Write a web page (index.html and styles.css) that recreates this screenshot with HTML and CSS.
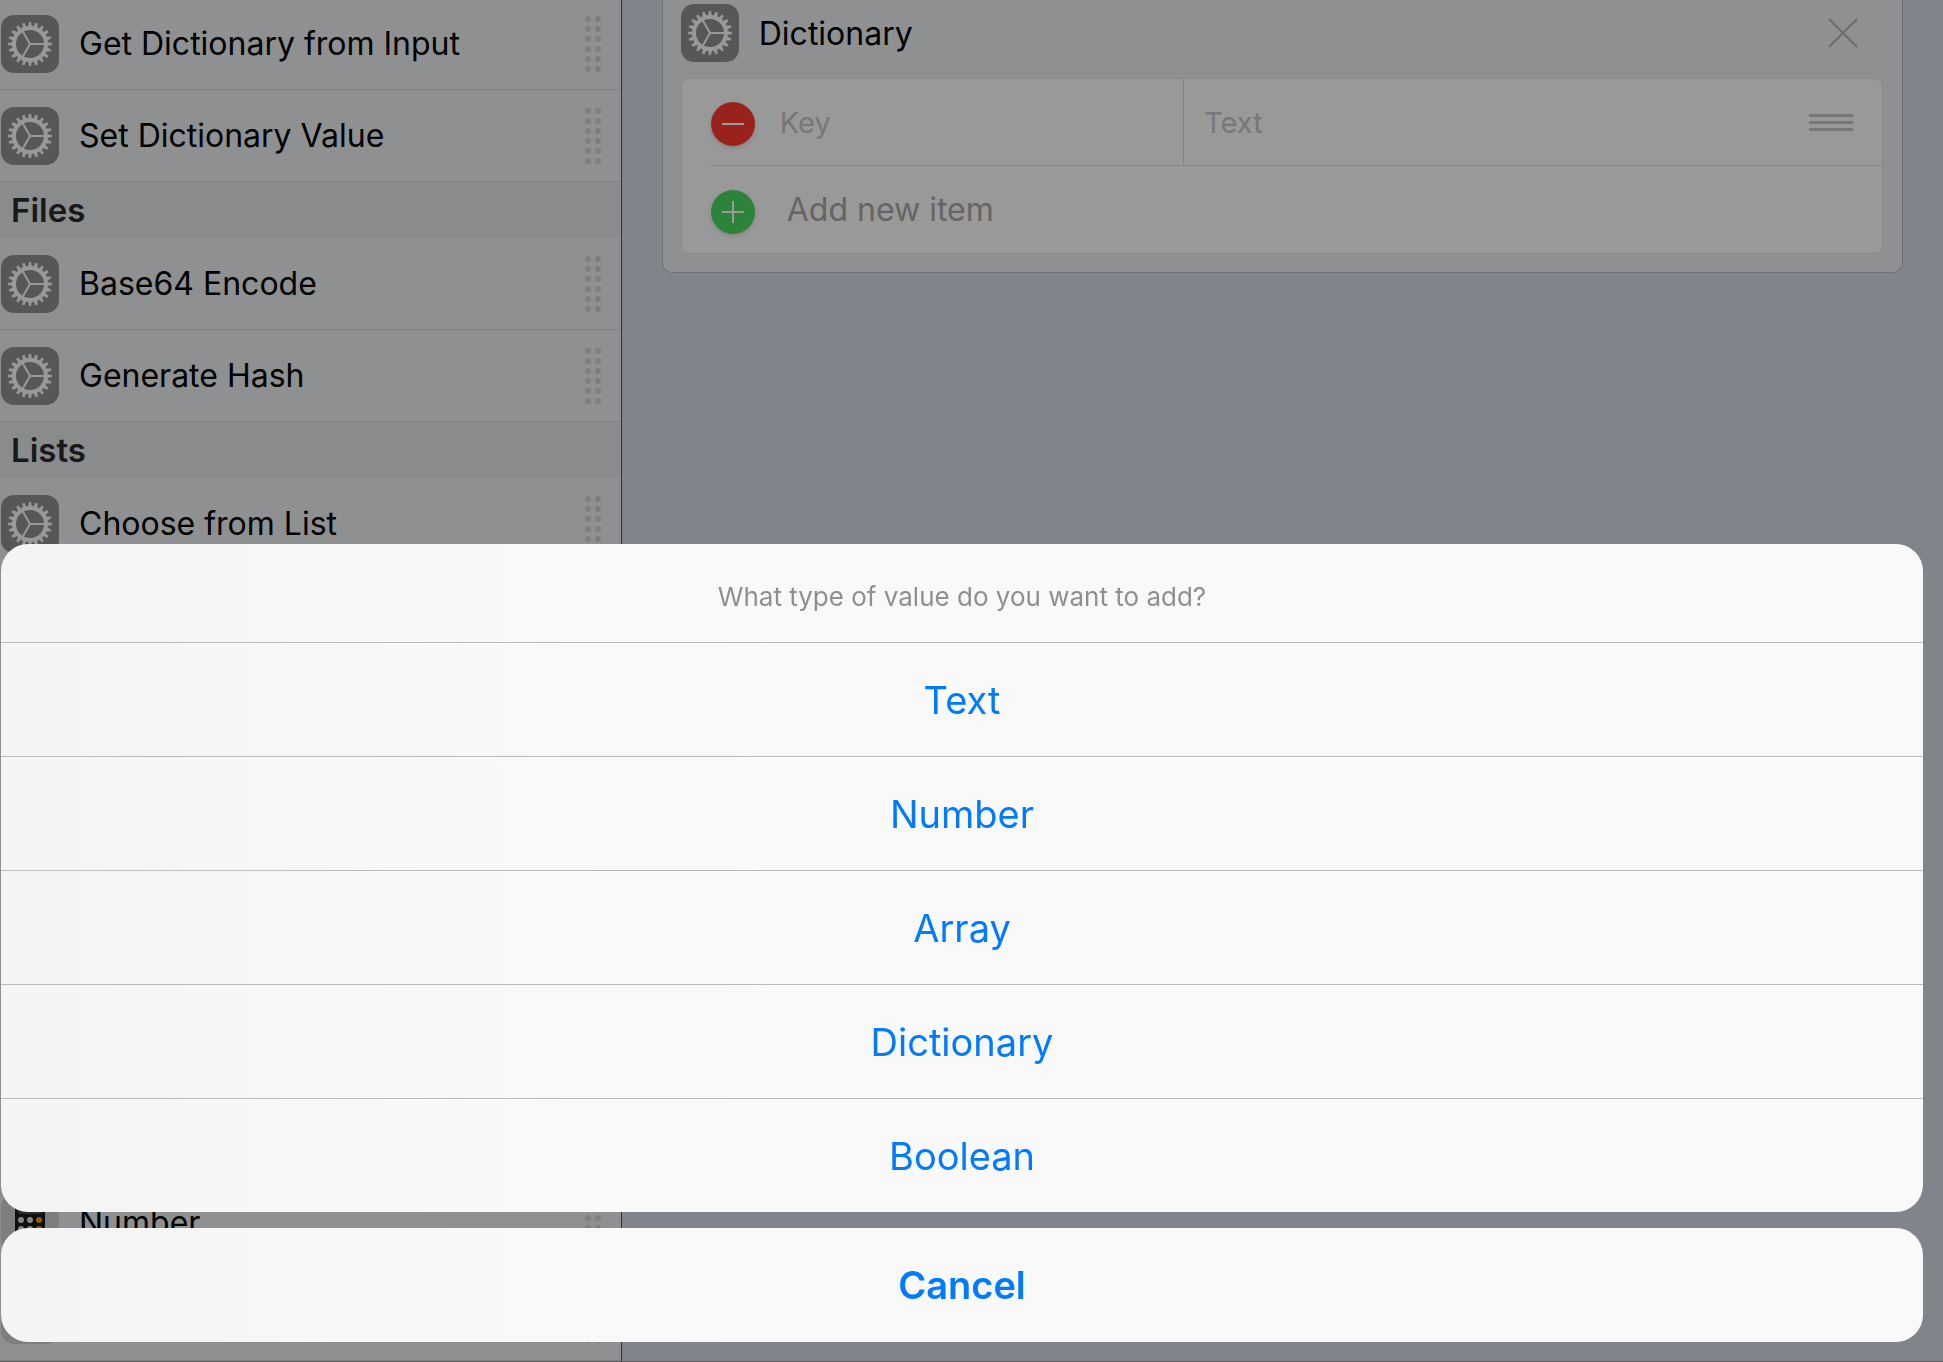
FILE: index.html
```html
<!DOCTYPE html>
<html lang="en">
<head>
    <meta charset="UTF-8">
    <meta name="viewport" content="width=device-width, initial-scale=1.0">
    <title>Dictionary</title>
    <link rel="stylesheet" href="styles.css">
</head>
<body>
    <!-- Shared icons -->
    <svg class="sprite" aria-hidden="true">
        <symbol id="gear" viewBox="0 0 58 58">
            <rect width="58" height="58" rx="13" fill="#929295"/>
            <g fill="none" stroke="#fff">
                <circle cx="29" cy="29" r="16" stroke-width="4"/>
                <circle cx="29" cy="29" r="18" stroke-width="3" pathLength="200" stroke-dasharray="6 4" stroke-dashoffset="3"/>
                <circle cx="29" cy="29" r="20" stroke-width="4" pathLength="200" stroke-dasharray="4 6" stroke-dashoffset="2"/>
                <path d="M29 29H44M29 29L21 15M29 29L21 43" stroke-width="2"/>
            </g>
        </symbol>
        <symbol id="grip" viewBox="0 0 16 56">
            <path d="M3 3V54M13 3V54" fill="none" stroke="#d0d4d9" stroke-width="6" stroke-linecap="round" stroke-dasharray="0 10"/>
        </symbol>
        <symbol id="calculator" viewBox="0 0 58 58">
            <rect width="58" height="58" rx="13" fill="#d2d2d2"/>
            <rect x="14" y="7" width="30" height="44" rx="3" fill="#1c1c1c"/>
            <rect x="17" y="10" width="24" height="10" rx="2" fill="#4c4c4c"/>
            <g fill="#e0e0e0">
                <circle cx="20" cy="26" r="3"/>
                <circle cx="29" cy="26" r="3"/>
                <circle cx="20" cy="35" r="3"/>
                <circle cx="29" cy="35" r="3"/>
                <circle cx="20" cy="44" r="3"/>
                <circle cx="29" cy="44" r="3"/>
            </g>
            <g fill="#f69a1a">
                <circle cx="38" cy="26" r="3"/>
                <circle cx="38" cy="35" r="3"/>
                <circle cx="38" cy="44" r="3"/>
            </g>
        </symbol>
    </svg>

    <div class="app">
        <aside class="sidebar">
            <div class="actions">
                <ul class="group">
                    <li class="action"><svg class="icon"><use href="#gear"/></svg><span class="action-name">Get Dictionary from Input</span><svg class="grip"><use href="#grip"/></svg></li>
                    <li class="action"><svg class="icon"><use href="#gear"/></svg><span class="action-name">Set Dictionary Value</span><svg class="grip"><use href="#grip"/></svg></li>
                </ul>
                <h2 class="group-title">Files</h2>
                <ul class="group">
                    <li class="action"><svg class="icon"><use href="#gear"/></svg><span class="action-name">Base64 Encode</span><svg class="grip"><use href="#grip"/></svg></li>
                    <li class="action"><svg class="icon"><use href="#gear"/></svg><span class="action-name">Generate Hash</span><svg class="grip"><use href="#grip"/></svg></li>
                </ul>
                <h2 class="group-title">Lists</h2>
                <ul class="group">
                    <li class="action"><svg class="icon"><use href="#gear"/></svg><span class="action-name">Choose from List</span><svg class="grip"><use href="#grip"/></svg></li>
                </ul>
            </div>
            <ul class="group">
                <li class="action"><svg class="icon"><use href="#calculator"/></svg><span class="action-name">Number</span><svg class="grip"><use href="#grip"/></svg></li>
                <li class="action"><svg class="icon"><use href="#calculator"/></svg><span class="action-name"></span><svg class="grip"><use href="#grip"/></svg></li>
            </ul>
        </aside>

        <main class="canvas">
            <section class="card">
                <header class="card-header">
                    <svg class="icon"><use href="#gear"/></svg>
                    <h1 class="card-title">Dictionary</h1>
                    <button class="close" type="button" aria-label="Remove">
                        <svg width="30" height="30" viewBox="0 0 30 30"><path d="M1 1L29 29M29 1L1 29" stroke="#b3b3b6" stroke-width="2"/></svg>
                    </button>
                </header>
                <div class="items">
                    <div class="item">
                        <button class="round" type="button" aria-label="Delete item">
                            <svg width="44" height="48" viewBox="0 0 44 48"><circle cx="22" cy="26" r="22" fill="#ff3b30"/><path d="M11 26H33" stroke="#fff" stroke-width="2"/></svg>
                        </button>
                        <input class="field key" type="text" placeholder="Key" aria-label="Key">
                        <input class="field value" type="text" placeholder="Text" aria-label="Text">
                        <svg class="reorder" width="44" height="17" viewBox="0 0 44 17"><path d="M0 1.500H44M0 8.500H44M0 15.500H44" stroke="#c7c7c7" stroke-width="3"/></svg>
                    </div>
                    <button class="item add" type="button">
                        <span class="round"><svg width="44" height="48" viewBox="0 0 44 48"><circle cx="22" cy="26" r="22" fill="#4cd964"/><path d="M11 26H33M22 15V37" stroke="#fff" stroke-width="2"/></svg></span>
                        <span class="add-label">Add new item</span>
                    </button>
                </div>
            </section>
        </main>
    </div>

    <div class="scrim">
        <div class="sheet" role="dialog" aria-labelledby="sheet-title">
            <div class="panel">
                <p class="sheet-title" id="sheet-title">What type of value do you want to add?</p>
                <button class="option" type="button">Text</button>
                <button class="option" type="button">Number</button>
                <button class="option" type="button">Array</button>
                <button class="option" type="button">Dictionary</button>
                <button class="option" type="button">Boolean</button>
            </div>
            <div class="panel">
                <button class="option cancel" type="button">Cancel</button>
            </div>
        </div>
    </div>
</body>
</html>
```

FILE: styles.css
```css
* {
    box-sizing: border-box;
    margin: 0;
    padding: 0;
}

body {
    font-family: Inter, "Liberation Sans", sans-serif;
    font-size: 32px;
    color: #000;
    height: 100vh;
    overflow: hidden;
}

button, input {
    font: inherit;
    border: none;
    background: none;
}

button {
    cursor: pointer;
}

ul {
    list-style: none;
}

svg {
    display: block;
    flex: none;
}

.sprite {
    position: absolute;
    width: 0;
    height: 0;
}

.app {
    display: flex;
    height: 100vh;
    border-bottom: 1px solid #98989b;
}

/* Sidebar */
.sidebar {
    width: 32%;
    display: flex;
    flex-direction: column;
    justify-content: space-between;
    background: #eff1f3;
    border-right: 1px solid #34579b;
}

.actions {
    margin-top: -2px;
}

.action {
    display: flex;
    align-items: center;
    gap: 20px;
    height: 92px;
    padding: 0 20px 0 1px;
    border-bottom: 1px solid #d6d8da;
}

.icon {
    width: 58px;
    height: 58px;
}

.action-name {
    flex: 1;
    white-space: nowrap;
}

.grip {
    width: 16px;
    height: 56px;
}

.group-title {
    height: 56px;
    padding-left: 11px;
    font-size: 33px;
    font-weight: 600;
    line-height: 56px;
    color: #2a2a2c;
    background: #e7e8ea;
}

/* Workflow canvas */
.canvas {
    flex: 1;
    padding: 0 40px;
    background: #d7dce6;
}

.card {
    padding: 4px 19px 18px 18px;
    background: #eff1f3;
    border: 1px solid #b9bcc2;
    border-top: none;
    border-radius: 0 0 10px 10px;
}

.card-header {
    display: flex;
    align-items: center;
    gap: 20px;
    padding-right: 25px;
    margin-bottom: 16px;
}

.card-title {
    flex: 1;
    font-size: 32px;
    font-weight: 400;
}

.items {
    padding-left: 29px;
    background: #fff;
    border: 1px solid #e4e6e8;
    border-radius: 8px;
}

.item {
    display: flex;
    align-items: center;
    width: 100%;
    height: 87px;
    padding-right: 29px;
    border-bottom: 1px solid #dcdee0;
}

.round svg {
    filter: drop-shadow(0 2px 2px rgba(0, 0, 0, 0.15));
}

.field {
    min-width: 0;
    height: 100%;
    font-size: 29px;
    outline: none;
}

.field::placeholder {
    color: #c7c7cb;
}

.key {
    flex: 2;
    margin-left: 25px;
}

.value {
    flex: 3;
    margin-right: 20px;
    border-left: 1px solid #dcdee0;
    text-indent: 20px;
}

.add {
    border-bottom: none;
    text-align: left;
}

.add-label {
    margin-left: 32px;
    color: #a8a8a8;
}

/* Action sheet */
.scrim {
    position: fixed;
    inset: 0;
    display: flex;
    align-items: flex-end;
    padding: 0 20px 20px 1px;
    background: rgba(0, 0, 0, 0.4);
}

.sheet {
    flex: 1;
    display: flex;
    flex-direction: column;
    gap: 16px;
}

.panel {
    overflow: hidden;
    background: linear-gradient(90deg, #f4f4f4, #f8f8f8 20%, #f9f9f9 40%);
    border-radius: 27px;
}

.sheet-title {
    padding-top: 8px;
    font-size: 26px;
    line-height: 90px;
    text-align: center;
    color: #8f8f8f;
}

.option {
    display: block;
    width: 100%;
    height: 114px;
    border-top: 1px solid #bbbcbe;
    font-size: 38px;
    color: #007aff;
}

.cancel {
    border-top: none;
    font-weight: 600;
}
```
